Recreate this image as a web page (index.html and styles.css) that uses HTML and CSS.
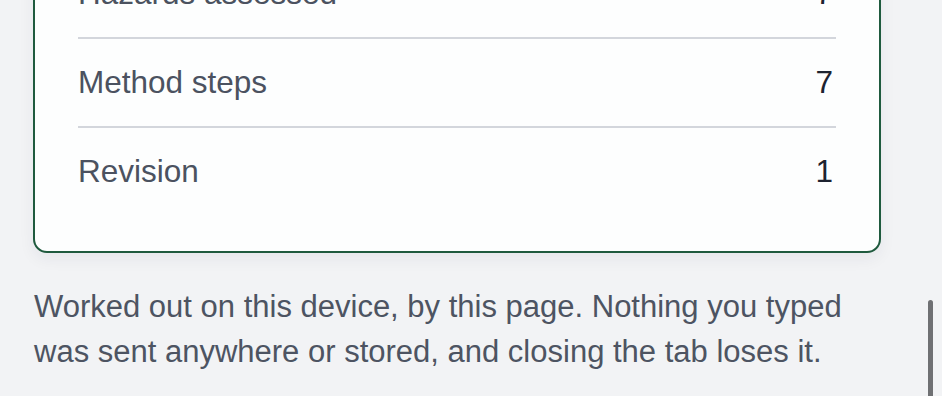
FILE: index.html
```html
<!DOCTYPE html>
<html lang="en">
<head>
    <meta charset="UTF-8">
    <meta name="viewport" content="width=device-width, initial-scale=1.0">
    <title>Method statement summary</title>
    <link rel="stylesheet" href="styles.css">
</head>
<body>
    <main class="page">
        <section class="summary">
            <div class="summary-row">
                <span class="label">Hazards assessed</span>
                <span class="value">7</span>
            </div>
            <div class="summary-row">
                <span class="label">Method steps</span>
                <span class="value">7</span>
            </div>
            <div class="summary-row">
                <span class="label">Revision</span>
                <span class="value">1</span>
            </div>
        </section>
        <p class="note">Worked out on this device, by this page. Nothing you typed was sent anywhere or stored, and closing the tab loses it.</p>
    </main>
    <div class="scroll-thumb"></div>
</body>
</html>
```

FILE: styles.css
```css
body {
    margin: 0;
    background: #f2f3f5;
    font-family: "Liberation Sans", Arial, sans-serif;
    overflow: hidden;
}

.page {
    width: 848px;
    margin: -88px 0 0 33px;
}

.summary {
    background: #fdfefe;
    border: 2px solid #1f5a3e;
    border-radius: 14px;
    padding: 36px 43px 36px 43px;
    box-shadow: 0 6px 16px rgba(30, 40, 60, 0.06);
}

.summary-row {
    display: flex;
    justify-content: space-between;
    align-items: center;
    height: 87px;
    border-top: 2px solid #d3d6dc;
}

.summary-row:first-child {
    border-top: none;
}

.label {
    font-size: 31.5px;
    color: #4b5260;
}

.value {
    font-size: 31.5px;
    color: #1d2330;
    padding-right: 3px;
}

.note {
    margin: 31px 0 0 1px;
    font-size: 31px;
    line-height: 45px;
    color: #4d5462;
}

.scroll-thumb {
    position: fixed;
    top: 300px;
    right: 9px;
    width: 5px;
    height: 110px;
    border-radius: 3px;
    background: #6f7073;
}
```
